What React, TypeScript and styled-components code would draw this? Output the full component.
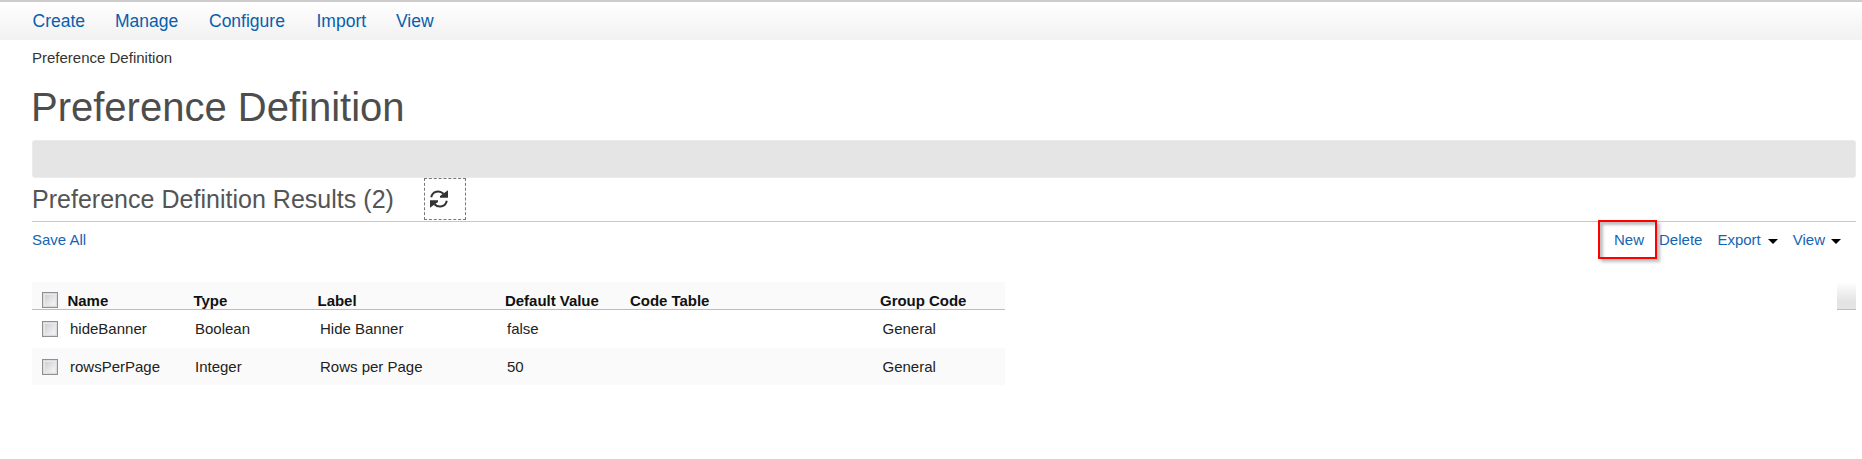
import React from "react";
import styled, { createGlobalStyle } from "styled-components";

const GlobalStyle = createGlobalStyle`
  * { box-sizing: border-box; }
  body {
    margin: 0;
    background: #fff;
    color: #222;
    font: 15px/18px "Liberation Sans", Arial, sans-serif;
  }
`;

const Page = styled.div`
  height: 459px;
  overflow: hidden;
`;

const NavBar = styled.nav`
  display: flex;
  height: 40px;
  padding: 9px 0 0 32.5px;
  border-top: 2px solid #ccc;
  background: linear-gradient(#fff, #f1f1f1);
`;

const NavLink = styled.a<{ $width: number }>`
  width: ${(p) => p.$width}px;
  color: #0560ae;
  font-size: 17.5px;
  line-height: 20px;
  white-space: nowrap;
`;

const Content = styled.main`
  padding: 0 6px 0 32px;
`;

const Breadcrumb = styled.div`
  padding-top: 9px;
  height: 38px;
  color: #333;
`;

const Title = styled.h1`
  margin: 0 0 0 -1px;
  height: 62px;
  padding-top: 6px;
  color: #4d4d4d;
  font-size: 40px;
  line-height: 46px;
  font-weight: 400;
`;

const Banner = styled.div`
  height: 38px;
  border: 1px solid #ebebeb;
  border-radius: 3px;
  background: #e5e5e5;
`;

const ResultsHeader = styled.header`
  display: flex;
  height: 44px;
  border-bottom: 1px solid #c9c9c9;
`;

const ResultsTitle = styled.h2`
  width: 392px;
  margin: 0;
  padding-top: 6px;
  color: #545454;
  font-size: 25px;
  line-height: 30px;
  font-weight: 400;
  letter-spacing: 0.02px;
`;

const RefreshButton = styled.a`
  width: 42px;
  height: 42px;
  padding: 11px 0 0 5px;
  border: 1px dashed #777;
`;

const Toolbar = styled.div`
  display: flex;
  align-items: flex-start;
  justify-content: space-between;
  height: 60px;
  padding-top: 9px;
`;

const Actions = styled.div`
  display: flex;
  padding-right: 15px;
`;

const Action = styled.a<{ $gap?: number }>`
  position: relative;
  display: flex;
  align-items: center;
  height: 18px;
  margin-right: ${(p) => p.$gap ?? 0}px;
  color: #1464b4;
`;

const Caret = styled.i<{ $gap: number }>`
  margin: 2px 0 0 ${(p) => p.$gap}px;
  border: solid transparent;
  border-width: 5px 5px 0;
  border-top-color: #000;
`;

const Highlight = styled.span`
  position: absolute;
  left: -16px;
  top: -11px;
  width: 59px;
  height: 39px;
  border: 2px solid #f00;
  box-shadow: 3px 3px 3px rgba(0, 0, 0, 0.25), inset 3px 3px 3px rgba(0, 0, 0, 0.25);
`;

const TableArea = styled.section`
  display: flex;
  justify-content: space-between;
`;

const Table = styled.div`
  width: 973px;
`;

const Row = styled.div<{ $shaded?: boolean }>`
  display: grid;
  grid-template-columns: 38px 125px 125px 187px 125px 250.5px 1fr;
  height: ${(p) => (p.$shaded ? 37 : 38)}px;
  padding-top: 10px;
  background: ${(p) => (p.$shaded ? "#fafafa" : "#fff")};
`;

const HeadRow = styled(Row)`
  grid-template-columns: 35.5px 126px 124px 187.5px 125px 250px 1fr;
  height: 28px;
  border-bottom: 1px solid #b7bec8;
  background: #fafafa;
  color: #111;
  font-weight: 700;
  letter-spacing: -0.03px;
`;

const Cell = styled.span`
  white-space: nowrap;
`;

const Checkbox = styled.span`
  display: block;
  width: 16px;
  height: 16px;
  margin: 1px 0 0 10px;
  padding: 2px;
  border: 1px solid #8e8f8f;
  background: linear-gradient(135deg, #cbcfd5, #f6f6f6) content-box, #f0f0f0;
  box-shadow: inset 0 0 0 1px #dcdcdc, inset 0 0 0 2px #e8e8e8;

  ${HeadRow} & {
    margin-top: 0;
  }
`;

const ScrollCorner = styled.div`
  width: 19px;
  height: 28px;
  border-bottom: 1px solid #b7bec8;
  background: linear-gradient(#fff, #e4e4e4 70%);
`;

const navItems: [string, number][] = [
  ["Create", 82.5],
  ["Manage", 94],
  ["Configure", 107.5],
  ["Import", 79.5],
  ["View", 50],
];

const headings = ["Name", "Type", "Label", "Default Value", "Code Table", "Group Code"];

const rows = [
  ["hideBanner", "Boolean", "Hide Banner", "false", "", "General"],
  ["rowsPerPage", "Integer", "Rows per Page", "50", "", "General"],
];

const RefreshIcon = () => (
  <svg width="18" height="18" viewBox="0 0 18 18" fill="none" stroke="#333" strokeWidth="2">
    <path d="M1.2 7.2C2.5 1 9.5-.2 13.5 3.8" />
    <path d="M16.8 10.8C15.5 17 8.5 18.2 4.5 14.2" />
    <path d="M18 .3V7.8H10V6ZM0 17.7V10.2H8V12Z" fill="#333" stroke="none" />
  </svg>
);

export default function App() {
  return (
    <Page>
      <GlobalStyle />
      <NavBar>
        {navItems.map(([label, width]) => (
          <NavLink key={label} $width={width}>{label}</NavLink>
        ))}
      </NavBar>
      <Content>
        <Breadcrumb>Preference Definition</Breadcrumb>
        <Title>Preference Definition</Title>
        <Banner />
        <ResultsHeader>
          <ResultsTitle>Preference Definition Results (2)</ResultsTitle>
          <RefreshButton aria-label="Refresh"><RefreshIcon /></RefreshButton>
        </ResultsHeader>
        <Toolbar>
          <Action>Save All</Action>
          <Actions>
            <Action $gap={15}>New<Highlight /></Action>
            <Action $gap={15}>Delete</Action>
            <Action $gap={15}>Export<Caret $gap={7} /></Action>
            <Action>View<Caret $gap={6} /></Action>
          </Actions>
        </Toolbar>
        <TableArea>
          <Table>
            <HeadRow>
              <Checkbox />
              {headings.map((h) => <Cell key={h}>{h}</Cell>)}
            </HeadRow>
            {rows.map((row, i) => (
              <Row key={row[0]} $shaded={i % 2 === 1}>
                <Checkbox />
                {row.map((value, j) => <Cell key={j}>{value}</Cell>)}
              </Row>
            ))}
          </Table>
          <ScrollCorner />
        </TableArea>
      </Content>
    </Page>
  );
}
